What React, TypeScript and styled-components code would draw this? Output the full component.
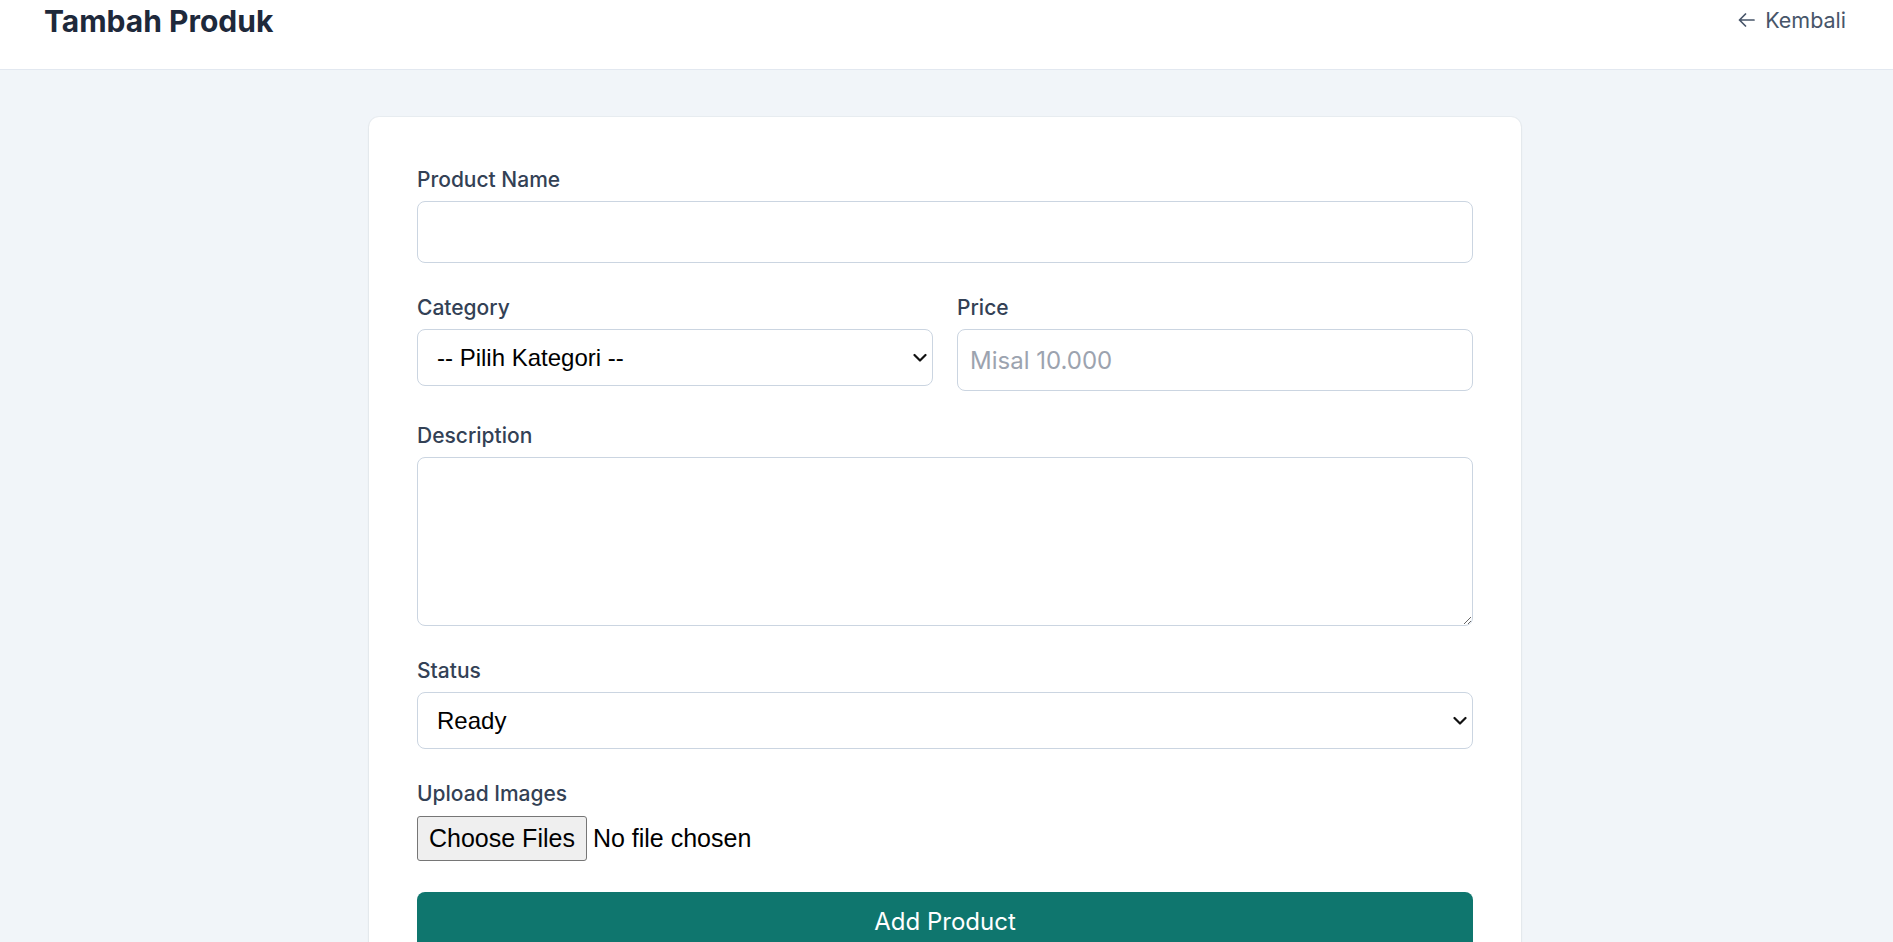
import React from "react";
import styled, { createGlobalStyle } from "styled-components";

const GlobalStyle = createGlobalStyle`
  html, body { margin: 0; padding: 0; }
  body {
    background: #f1f5f9;
    font-family: Inter, "Noto Sans", sans-serif;
  }
  * { box-sizing: border-box; }
`;

const Header = styled.header`
  height: 70px;
  background: #ffffff;
  border-bottom: 1px solid #e2e8f0;
  display: flex;
  justify-content: space-between;
  align-items: flex-start;
  padding: 3px 47px 0 44px;
`;

const Title = styled.h1`
  margin: 0;
  font-size: 30px;
  line-height: 36px;
  font-weight: 700;
  color: #1e293b;
`;

const BackLink = styled.a`
  margin-top: 3px;
  font-size: 21.5px;
  line-height: 28px;
  color: #475569;
  text-decoration: none;
  display: flex;
  align-items: center;
  gap: 10px;
`;

const Main = styled.main`
  padding: 47px 3px 48px 0;
`;

const Card = styled.div`
  max-width: 1152px;
  margin: 0 auto;
  background: #ffffff;
  border-radius: 10px;
  padding: 48px;
  box-shadow: 0 1px 3px rgba(15, 23, 42, 0.06), 0 0 0 1px rgba(15, 23, 42, 0.03);
`;

const Form = styled.form`
  display: flex;
  flex-direction: column;
  gap: 30px;
`;

const Field = styled.div`
  display: flex;
  flex-direction: column;
`;

const Row = styled.div`
  display: grid;
  grid-template-columns: 1fr 1fr;
  gap: 24px;
  align-items: start;
`;

const Label = styled.label`
  padding-top: 1px;
  font-size: 21px;
  line-height: 28px;
  font-weight: 500;
  color: #334155;
  margin-bottom: 7px;
`;

const TextInput = styled.input`
  height: 62px;
  width: 100%;
  padding: 0 12px;
  border: 1px solid #cbd5e1;
  border-radius: 8px;
  background: #fff;
  font-family: Inter, "Noto Sans", sans-serif;
  font-size: 24px;
  color: #0f172a;
  outline: none;
  &::placeholder { color: #9ca3af; }
`;

const TextArea = styled.textarea`
  height: 169px;
  width: 100%;
  padding: 12px;
  border: 1px solid #cbd5e1;
  border-radius: 8px;
  background: #fff;
  font-family: Inter, "Noto Sans", sans-serif;
  font-size: 24px;
  color: #0f172a;
  outline: none;
  resize: vertical;
`;

const SelectWrap = styled.div`
  position: relative;
`;

const Select = styled.select`
  appearance: none;
  -webkit-appearance: none;
  width: 100%;
  height: 57px;
  padding: 0 40px 0 19px;
  border: 1px solid #cbd5e1;
  border-radius: 8px;
  background: #fff;
  font-family: "Liberation Sans", Arial, sans-serif;
  font-size: 24px;
  color: #000;
  outline: none;
`;

const Chevron = styled.svg`
  position: absolute;
  right: 6px;
  top: 50%;
  transform: translateY(-50%);
  pointer-events: none;
`;

const FileInput = styled.input`
  display: block;
  padding: 1px 0;
  font-family: "Liberation Sans", Arial, sans-serif;
  font-size: 25px;
  color: #000;
  &::file-selector-button {
    height: 45px;
    padding: 0 11px;
    margin-right: 6px;
    background: #efefef;
    border: 1px solid #767676;
    border-radius: 3px;
    font: inherit;
    color: #000;
  }
`;

const SubmitButton = styled.button`
  width: 100%;
  height: 58px;
  background: #0f766e;
  color: #ffffff;
  border: none;
  border-radius: 8px;
  font-family: Inter, "Noto Sans", sans-serif;
  font-size: 24px;
  font-weight: 400;
  cursor: pointer;
`;

const ArrowIcon = styled.svg`
  flex: none;
`;

const ChevronIcon = () => (
  <Chevron width="14" height="9" viewBox="0 0 14 9" aria-hidden="true">
    <polyline points="1.5,1.5 7,7 12.5,1.5" fill="none" stroke="#111" strokeWidth="2.2" strokeLinecap="round" strokeLinejoin="round" />
  </Chevron>
);

export default function App() {
  return (
    <>
      <GlobalStyle />
      <Header>
        <Title>Tambah Produk</Title>
        <BackLink href="#">
          <ArrowIcon width="17" height="14" viewBox="0 0 17 14" aria-hidden="true">
            <path d="M16 7H1.5M7.5 1 1.5 7l6 6" fill="none" stroke="#475569" strokeWidth="1.7" strokeLinecap="round" strokeLinejoin="round" />
          </ArrowIcon>
          Kembali
        </BackLink>
      </Header>
      <Main>
        <Card>
          <Form onSubmit={(e) => e.preventDefault()}>
            <Field>
              <Label htmlFor="name">Product Name</Label>
              <TextInput id="name" type="text" />
            </Field>
            <Row>
              <Field>
                <Label htmlFor="category">Category</Label>
                <SelectWrap>
                  <Select id="category" defaultValue="">
                    <option value="">-- Pilih Kategori --</option>
                  </Select>
                  <ChevronIcon />
                </SelectWrap>
              </Field>
              <Field>
                <Label htmlFor="price">Price</Label>
                <TextInput id="price" type="text" placeholder="Misal 10.000" />
              </Field>
            </Row>
            <Field>
              <Label htmlFor="desc">Description</Label>
              <TextArea id="desc" />
            </Field>
            <Field>
              <Label htmlFor="status">Status</Label>
              <SelectWrap>
                <Select id="status" defaultValue="ready">
                  <option value="ready">Ready</option>
                  <option value="preorder">Pre-order</option>
                </Select>
                <ChevronIcon />
              </SelectWrap>
            </Field>
            <Field>
              <Label htmlFor="images">Upload Images</Label>
              <FileInput id="images" type="file" multiple />
            </Field>
            <SubmitButton type="submit">Add Product</SubmitButton>
          </Form>
        </Card>
      </Main>
    </>
  );
}
